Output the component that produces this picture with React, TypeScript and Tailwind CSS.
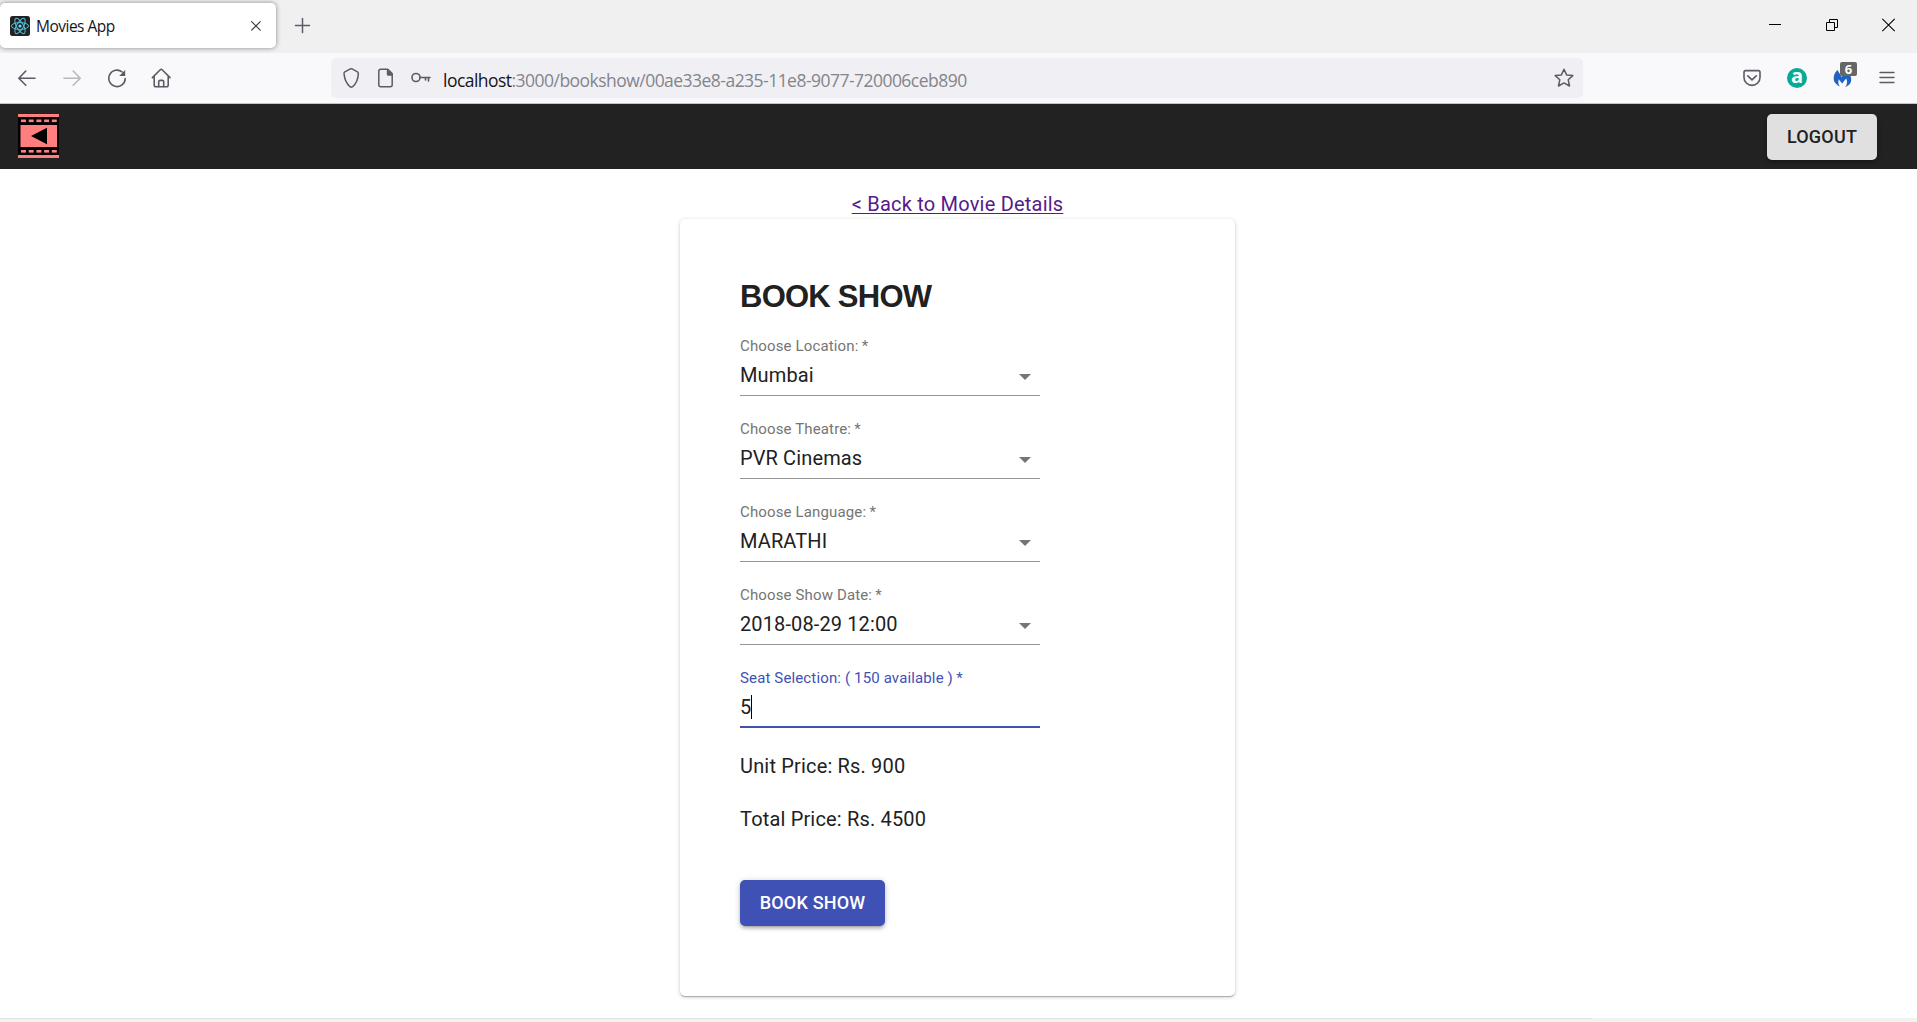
import React from "react";

const stroke = {
  fill: "none",
  stroke: "#5b5b66",
  strokeWidth: 1.6,
  strokeLinecap: "round" as const,
  strokeLinejoin: "round" as const,
};

function ReactIcon() {
  return (
    <svg className="h-5 w-5" viewBox="0 0 20 20">
      <rect width="20" height="20" rx="2.5" fill="#222" />
      <g fill="none" stroke="#53bfdc" strokeWidth="1">
        <ellipse cx="10" cy="10" rx="8.6" ry="3.4" />
        <ellipse cx="10" cy="10" rx="8.6" ry="3.4" transform="rotate(60 10 10)" />
        <ellipse cx="10" cy="10" rx="8.6" ry="3.4" transform="rotate(120 10 10)" />
      </g>
      <circle cx="10" cy="10" r="1.6" fill="#61dafb" />
    </svg>
  );
}

function TabStrip() {
  return (
    <div className="flex h-[53px] items-start bg-[#f0f0f0]">
      <div className="mt-[3px] flex h-[45px] w-[276px] items-center rounded-[5px] bg-white pl-[10px] pr-[14px] shadow-[0_0_5px_rgba(0,0,0,0.45)]">
        <ReactIcon />
        <span className="ml-[6px] mt-[2px] flex-1 font-['Open_Sans','Noto_Sans',sans-serif] text-[15.5px] tracking-[-0.5px] text-[#15141a]">
          Movies App
        </span>
        <svg className="h-3 w-3" viewBox="0 0 12 12" {...stroke} stroke="#3a3944" strokeWidth={1.2}>
          <path d="M1.6 1.6l8.6 8.6M10.2 1.6L1.6 10.2" />
        </svg>
      </div>
      <svg className="ml-[18px] mt-[17px] h-[17px] w-[17px]" viewBox="0 0 17 17" {...stroke} strokeWidth={1.5}>
        <path d="M8.5 1.5v14M1.5 8.5h14" />
      </svg>
      <div className="ml-auto mr-[21px] mt-[18px] flex gap-[43px]">
        <svg className="h-[14px] w-[14px]" viewBox="0 0 14 14">
          <path d="M1 6.5h12" stroke="#000" />
        </svg>
        <svg className="h-[14px] w-[14px]" viewBox="0 0 14 14" fill="none" stroke="#000">
          <path d="M1.5 4.5h8v8h-8zM4.5 4.5v-3h8v8h-3" />
        </svg>
        <svg className="h-[14px] w-[14px]" viewBox="0 0 14 14" fill="none" stroke="#000" strokeWidth="1.1">
          <path d="M.3.8l12.4 12.4M12.7.8L.3 13.2" />
        </svg>
      </div>
    </div>
  );
}

function NavBar() {
  return (
    <div className="flex h-[51px] items-center border-b border-[#c3c6c3] bg-[#f9f9fb]">
      <div className="flex items-center gap-[25px] pl-[17px]">
        <svg className="h-5 w-5" viewBox="0 0 20 20" {...stroke}>
          <path d="M18 10.2H2M8.8 3L1.8 10.2l7 7" />
        </svg>
        <svg className="h-5 w-5 opacity-40" viewBox="0 0 20 20" {...stroke}>
          <path d="M2 10.2h16M11.2 3l7 7.2-7 7" />
        </svg>
        <svg className="h-5 w-5" viewBox="0 0 20 20" {...stroke}>
          <path d="M18.2 10.6a8.2 8.2 0 1 1-3-6.6" />
          <path d="M18.2 2v6h-6z" fill="#5b5b66" stroke="none" />
        </svg>
        <svg className="-ml-[1px] h-5 w-5" viewBox="0 0 20 20" {...stroke}>
          <path d="M1.4 9.6L9 2Q10.2.9 11.4 2L19 9.6M3.2 8.4V17q0 1.8 1.8 1.8h10.4q1.8 0 1.8-1.8V8.4" />
          <path d="M7.7 18.6v-4.8q0-1.4 1.4-1.4h2.2q1.4 0 1.4 1.4v4.8" />
        </svg>
      </div>
      <div className="ml-[160px] flex h-10 w-[1252px] items-center rounded-[5px] bg-[#f0f0f4] pl-[11px] pr-[9px]">
        <svg className="mb-[1px] h-5 w-5" viewBox="0 0 20 20" {...stroke} strokeWidth={1.5}>
          <path d="M8.4.9q.9-.4 1.7 0l5.4 3q.8.500.8 1.500C16.200 11 14.500 15.200 10.600 18.700q-1.300 1-2.600 0C4.100 15.200 2.400 11 2 5.400q0-1 .8-1.500z" />
        </svg>
        <svg className="ml-[14px] h-5 w-5" viewBox="0 0 20 20" {...stroke} strokeWidth={1.5}>
          <path d="M4.800 1.200h7l4.400 4.400v11.200q0 2-2 2H4.800q-2 0-2-2V3.200q0-2 2-2z" />
          <path d="M10.800 1l5.600 5.600v1.200h-4q-1.600 0-1.600-1.600z" fill="#5b5b66" stroke="none" />
        </svg>
        <svg className="ml-[14px] h-5 w-[22px]" viewBox="0 0 22 20" {...stroke}>
          <circle cx="6" cy="9.500" r="4" />
          <path d="M10 9.500h10M18.500 9.500v3.600M15.500 9.500v2.400" />
        </svg>
        <span className="ml-[11px] mt-[4px] whitespace-nowrap font-['Open_Sans','Noto_Sans',sans-serif] text-[17.500px] tracking-[-0.530px] text-[#84848c]">
          <span className="text-[#15141a]">localhost</span>:3000/bookshow/00ae33e8-a235-11e8-9077-720006ceb890
        </span>
        <svg className="ml-auto h-5 w-5" viewBox="0 0 20 20" {...stroke} strokeWidth={1.500}>
          <path d="M10 1.200l2.600 5.700 6.200.7-4.600 4.200 1.300 6.200-5.500-3.100-5.500 3.100 1.300-6.200L1.200 7.600l6.200-.7z" />
        </svg>
      </div>
      <div className="ml-auto mr-[20px] flex items-center">
        <svg className="mr-[-1px] h-5 w-5" viewBox="0 0 20 20" {...stroke}>
          <path d="M3.500 2.600h13q1.500 0 1.500 1.800v5a8 8 0 0 1-16 0v-5q0-1.800 1.500-1.800z" />
          <path d="M5.800 7.800l4.200 4 4.200-4" />
        </svg>
        <div className="ml-[26px] flex h-5 w-5 items-center justify-center rounded-full bg-[#06ab98] font-['Open_Sans',sans-serif] text-[20px] font-bold leading-none text-white">
          <span className="-mt-[5px]">a</span>
        </div>
        <div className="relative ml-[26px] h-5 w-5">
          <svg className="h-5 w-5" viewBox="0 0 20 20">
            <path
              d="M4.500 2C.5 5.500-.8 12 2.800 15.600q2 2.300 4.200 2.900c-1.800-2-2-3.800-1.300-7.200l3.400 4.200 4-5q2.300 4.500-.9 8.400C17 17.500 19.500 13 17.500 8L13 3 8.700 9z"
              fill="#1f62bf"
            />
          </svg>
          <span className="absolute -top-[6px] left-[7px] flex h-[14px] w-[17px] items-center justify-center rounded-[2px] bg-[#666] font-['Open_Sans',sans-serif] text-[13px] font-bold leading-none text-white">
            6
          </span>
        </div>
        <svg className="ml-[24px] h-5 w-5" viewBox="0 0 20 20" {...stroke} strokeWidth={1.400}>
          <path d="M3 4.500h14M3 9.500h14M3 14.500h14" />
        </svg>
      </div>
    </div>
  );
}

function Logo() {
  const holes = [3, 10.700, 18.400, 26.100, 33.800];
  return (
    <svg className="-mt-[1px] h-11 w-[41px]" viewBox="0 0 41 44">
      <rect width="41" height="44" fill="#ff7f7f" />
      <rect y="3" width="41" height="38" fill="#000" />
      <rect x="2.500" y="11" width="36.500" height="22" fill="#ff7f7f" />
      {holes.map((x) => (
        <React.Fragment key={x}>
          <rect x={x} y="5.500" width="5" height="2.600" fill="#ff7f7f" />
          <rect x={x} y="36" width="5" height="2.600" fill="#ff7f7f" />
        </React.Fragment>
      ))}
      <path d="M13 22L29 13.700V30.300z" fill="#000" />
    </svg>
  );
}

function AppHeader() {
  return (
    <header className="flex h-[65px] items-center justify-between bg-[#222] pl-[18px] pr-10">
      <Logo />
      <button className="mt-[1px] h-[46px] w-[110px] rounded-[5px] bg-[#e0e0e0] pb-[2px] text-[18px] font-medium tracking-[0.200px] text-[#212121] shadow-[0_2px_5px_rgba(0,0,0,0.4)]">
        LOGOUT
      </button>
    </header>
  );
}

function FieldLabel({ text, active = false }: { text: string; active?: boolean }) {
  return (
    <label
      className={
        active
          ? "mt-[3px] text-[15px] leading-[20px] tracking-[0.140px] text-[#3f51b5]"
          : "mt-[3px] text-[15px] leading-[20px] tracking-[0.140px] text-[#757575]"
      }
    >
      {text}
      {"\u2009"}*
    </label>
  );
}

function SelectField({ label, value }: { label: string; value: string }) {
  return (
    <div className="mb-5 flex h-[63px] flex-col border-b border-[#949494]">
      <FieldLabel text={label} />
      <div className="mt-[4px] flex items-center justify-between">
        <span className="text-[20px] leading-[30px] tracking-[0.120px] text-[#212121]">{value}</span>
        <svg className="mr-[9px] mt-[3px] h-[6px] w-3" viewBox="0 0 12 6">
          <path d="M0 0h12L6 6z" fill="#757575" />
        </svg>
      </div>
    </div>
  );
}

const fields = [
  { label: "Choose Location:", value: "Mumbai" },
  { label: "Choose Theatre:", value: "PVR Cinemas" },
  { label: "Choose Language:", value: "MARATHI" },
  { label: "Choose Show Date:", value: "2018-08-29 12:00" },
];

export default function App() {
  return (
    <div className="flex h-[1022px] w-full flex-col overflow-hidden bg-white font-[Roboto,sans-serif]">
      <TabStrip />
      <NavBar />
      <AppHeader />
      <main className="flex flex-1 flex-col items-center pr-[2px] pt-[20px]">
        <a className="h-[30px] text-[20px] leading-[30px] tracking-[0.210px] text-[#551a8b] underline decoration-1 underline-offset-2">
          &lt; Back to Movie Details
        </a>
        <section className="h-[777px] w-[555px] rounded-[5px] bg-white px-[60px] pt-[61px] shadow-[0_1px_4px_rgba(0,0,0,0.2),0_1px_1px_rgba(0,0,0,0.14),0_2px_1px_-1px_rgba(0,0,0,0.12)]">
          <h2 className="h-[53px] font-['Liberation_Sans',Arial,sans-serif] text-[31px] font-bold leading-[34px] tracking-[-0.750px] text-[#212121]">
            BOOK SHOW
          </h2>
          <div className="w-[300px]">
            {fields.map((f) => (
              <SelectField key={f.label} label={f.label} value={f.value} />
            ))}
            <div className="flex h-[63px] flex-col border-b-2 border-[#3f51b5]">
              <FieldLabel text="Seat Selection: ( 150 available )" active />
              <div className="mt-[4px] flex items-center text-[20px] leading-[30px] text-[#212121]">
                5<span className="h-6 w-px bg-black" />
              </div>
            </div>
          </div>
          <p className="mt-[23px] text-[20px] leading-[30px] tracking-[0.170px] text-[#212121]">Unit Price: Rs. 900</p>
          <p className="mt-[23px] text-[20px] leading-[30px] tracking-[0.170px] text-[#212121]">Total Price: Rs. 4500</p>
          <button className="mt-[46px] h-[46px] w-[145px] rounded-[5px] bg-[#3f51b5] pb-[2px] text-[18px] font-medium tracking-[0.200px] text-white shadow-[0_1px_6px_rgba(0,0,0,0.2),0_3px_3px_rgba(0,0,0,0.14),0_4px_1px_-3px_rgba(0,0,0,0.12)]">
            BOOK SHOW
          </button>
        </section>
      </main>
      <footer className="flex h-1 bg-[#f2f2f2]">
        <div className="h-px w-[1592px] bg-[#e1e1e1]" />
      </footer>
    </div>
  );
}
